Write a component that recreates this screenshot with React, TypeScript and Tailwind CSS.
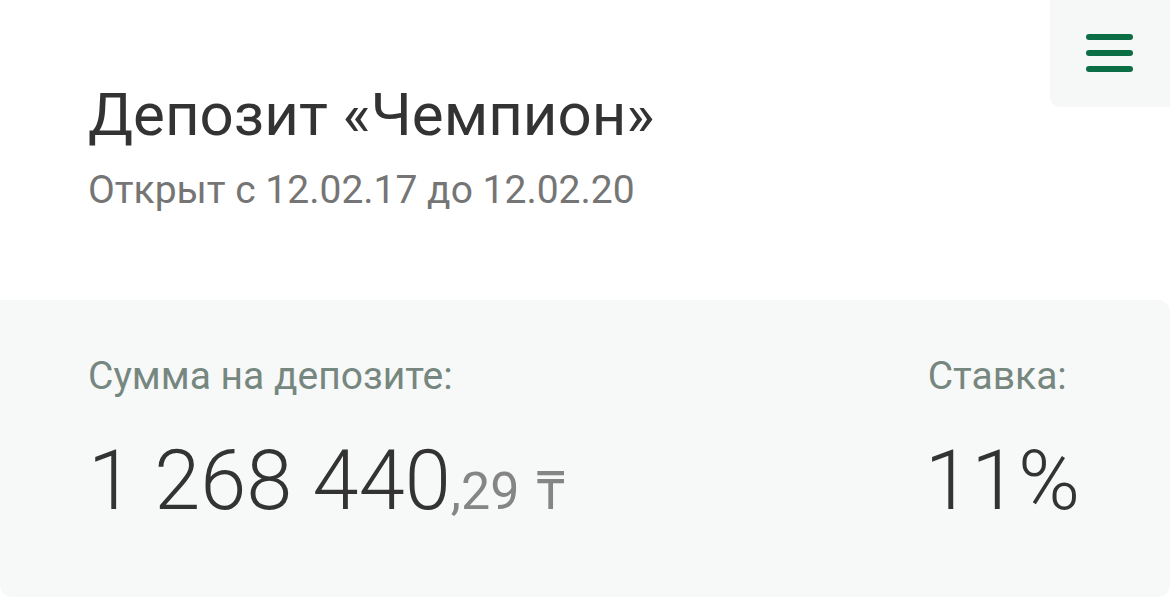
export default function App() {
  return (
    <div className="w-full h-[600px] bg-white overflow-hidden font-['Roboto','Noto_Sans',sans-serif] text-[#333333]">
      {/* шапка */}
      <div className="flex justify-between items-start">
        <div className="pl-[88px] pt-[85px]">
          <h1 className="text-[60px] leading-none font-normal text-[#333333]">Депозит «Чемпион»</h1>
          <p className="mt-[26px] text-[39px] leading-none text-[#757575]">Открыт с 12.02.17 до 12.02.20</p>
        </div>
        <button className="w-[120px] h-[107px] bg-[#f6f8f7] rounded-bl-[10px] flex flex-col items-center justify-center gap-[10px] pr-[2px] pb-[2px]">
          <span className="block w-[47px] h-[6px] rounded-full bg-[#0b6e45]" />
          <span className="block w-[47px] h-[6px] rounded-full bg-[#0b6e45]" />
          <span className="block w-[47px] h-[6px] rounded-full bg-[#0b6e45]" />
        </button>
      </div>

      {/* сумма и ставка */}
      <div className="mt-[90px] h-[297px] bg-[#f7f9f8] rounded-r-[12px] rounded-bl-[12px] flex justify-between pl-[88px] pr-[90px] pt-[57px]">
        <div>
          <div className="text-[39px] leading-none text-[#76877f]">Сумма на депозите:</div>
          <div className="mt-[43px] flex items-baseline">
            <span className="text-[83px] leading-none font-light text-[#333333]">1 268 440</span>
            <span className="text-[52px] leading-none text-[#858585]">,29</span>
            <span className="ml-[17px] text-[52px] leading-none text-[#858585]">₸</span>
          </div>
        </div>
        <div>
          <div className="text-[39px] leading-none text-[#76877f] pl-[3px]">Ставка:</div>
          <div className="mt-[43px] text-[84px] leading-none font-light text-[#333333]">11%</div>
        </div>
      </div>
    </div>
  );
}
